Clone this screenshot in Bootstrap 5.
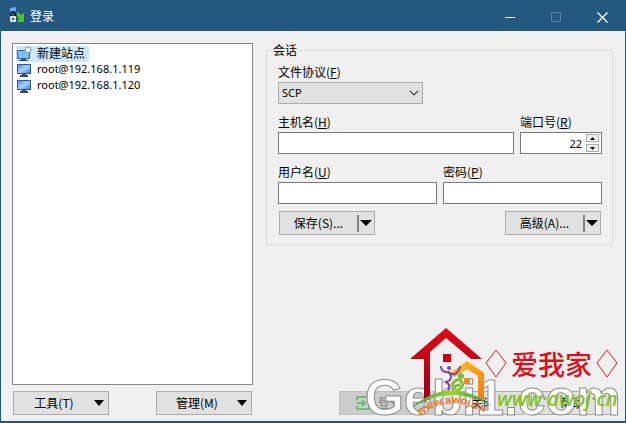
<!DOCTYPE html>
<html lang="zh-CN">
<head>
<meta charset="utf-8">
<meta name="viewport" content="width=device-width, initial-scale=1">
<title>登录</title>
<link href="https://cdn.jsdelivr.net/npm/bootstrap@5.3.0/dist/css/bootstrap.min.css" rel="stylesheet">
<style>
body{font-family:"Noto Sans CJK SC",sans-serif;font-size:12px;line-height:16px;color:#000;background:#f0f0f0}
.win{border:1px solid #24587f;border-top:0;border-bottom-width:2px}
.titlebar{height:31px;background:#24587f;color:#fff}
.titlebar h1{font-size:12px;line-height:16px}
.cap{width:46px;height:31px;background:none;border:0;color:#fff;padding:0}
.cap:disabled{color:#5583a3}
.split{display:grid;grid-template-columns:241fr 347fr;column-gap:13px}
.content{padding:11px 12px 0 11px}
.foot{padding:6px 12px 6px 11px}
.footleft{padding:0 1px}
.sites{background:#fff;border:1px solid #828790;margin-top:1px;padding:2px 3px}
.site{height:16px;border:0;background:none;padding:0;font-family:"Noto Sans","Noto Sans CJK SC",sans-serif;font-size:11px;line-height:16px;gap:4px;color:#000}
.site svg{width:17px;height:16px}
.site span{padding:0 4px 2px 0;line-height:14px}
.site.on{background:#cce8ff;font-size:12px}
.site.on span{padding-bottom:0}
.session{border:1px solid #dcdcdc;padding:6px 10px 9px 11px}
.session legend{float:none;width:auto;font-size:12px;line-height:16px;margin:0 0 0 -6px;padding:0 1px}
.fld{margin-bottom:10px}
.fld label{display:block;line-height:16px;margin-bottom:2px}
.ctl{height:22px;border:1px solid #7a7a7a;border-radius:0;padding:0 3px;font-family:"Noto Sans",sans-serif;font-size:11px;line-height:16px;background-color:#fff;color:#000}
.proto{width:145px;border-color:#adadad;background-color:#e1e1e1;background-size:10px;background-position:right 3px center}
.pair{gap:6px}
.port{flex:0 0 82px}
.spin{border:1px solid #7a7a7a;background:#fff;height:22px;padding:1px 2px}
.spin input{border:0;height:18px;text-align:right;min-width:0;padding:0 4px}
.spin button{width:13px;height:8px;padding:0;border:1px solid #adadad;background:#f0f0f0;line-height:0}
.spin svg{display:block;margin:auto}
.acts{margin:-3px 1px 0}
.key{width:96px;height:24px;border:1px solid #adadad;border-radius:0;background:#e1e1e1;padding:0;font-size:12px;line-height:16px;color:#000}
.key:disabled{background:#ccc;border-color:#bfbfbf;color:#838383;opacity:1}
.short{width:82px}
.bar{width:2px;height:17px;background:#808080}
.drop{margin:0 2px 0 1px;flex-shrink:0}
.footkeys{gap:7px}
.marks{right:0;bottom:0;width:262px;height:100px;pointer-events:none}
</style>
</head>
<body>
<div class="win d-flex flex-column min-vh-100 position-relative">
  <header class="titlebar d-flex align-items-center">
    <svg class="ms-2 me-1" width="17" height="17" viewBox="0 0 17 17" aria-hidden="true">
      <path d="M1 1l6-1v5L5 4 3 8 1 6z" fill="#62b0f2"/><path d="M8 4l4 4 3-2v9H8l2-3-2-3z" fill="#4cc422"/>
      <path d="M2 9V7a2 2 0 0 1 4 0v2" fill="none" stroke="#182530" stroke-width="2"/><path d="M1 9h6v6H1z" fill="#d8dde2"/><path d="M3 11h2v2H3z" fill="#555"/>
    </svg>
    <h1 class="m-0 fw-normal flex-grow-1">登录</h1>
    <button class="cap" aria-label="最小化"><svg width="10" height="11"><path d="M0 5.500h10" stroke="currentColor"/></svg></button>
    <button class="cap" aria-label="最大化" disabled><svg width="11" height="11"><path d="M.5.500h9v9h-9z" fill="none" stroke="currentColor"/></svg></button>
    <button class="cap" aria-label="关闭窗口"><svg width="11" height="11"><path d="M.5.500l10 10M10.500.500l-10 10" stroke="currentColor" stroke-width="1.300"/></svg></button>
  </header>

  <svg width="0" height="0" class="position-absolute" aria-hidden="true">
    <defs>
      <linearGradient id="scr" x2="1" y2="1"><stop stop-color="#4b8ee8"/><stop offset=".5" stop-color="#a9d0ff"/><stop offset="1" stop-color="#3d7fe0"/></linearGradient>
      <g id="pc"><path d="M1 2h14v10H1z" fill="#2c5c95"/><path d="M2 3h12v8H2z" fill="url(#scr)"/><path d="M6 12h4v1h2v2H4v-2h2z" fill="#3c4855"/></g>
    </defs>
  </svg>

  <main class="split content flex-grow-1">
    <div class="sites d-flex flex-column align-items-start">
      <button class="site on d-flex align-items-center"><svg viewBox="0 0 17 16"><path d="M1 4h13v9H1z" fill="#2c6a9f"/><path d="M2 5h11v7H2z" fill="#7fbdf0"/><path d="M5 13h5v1h2v1H3v-1h2z" fill="#3c4855"/><path d="M12 0v8M8 4h8M9 1l6 6M15 1L9 7" stroke="#8899a8"/><circle cx="12" cy="4" r="2.500" fill="#fff" stroke="#94a4b3"/></svg><span>新建站点</span></button>
      <button class="site d-flex align-items-center"><svg viewBox="0 0 17 16"><use href="#pc"/></svg><span>root@192.168.1.119</span></button>
      <button class="site d-flex align-items-center"><svg viewBox="0 0 17 16"><use href="#pc"/></svg><span>root@192.168.1.120</span></button>
    </div>
    <div>
      <fieldset class="session">
        <legend>会话</legend>
        <div class="fld"><label for="proto">文件协议(<u>F</u>)</label>
          <select id="proto" class="form-select ctl proto"><option>SCP</option></select></div>
        <div class="d-flex pair">
          <div class="fld flex-grow-1"><label for="host">主机名(<u>H</u>)</label><input id="host" class="form-control ctl"></div>
          <div class="fld port"><label for="port">端口号(<u>R</u>)</label>
            <div class="spin d-flex"><input id="port" class="form-control ctl" value="22">
              <div class="d-flex flex-column justify-content-between">
                <button aria-label="增加"><svg width="5" height="3"><path d="M0 3h5L2.500 0z"/></svg></button>
                <button aria-label="减少"><svg width="5" height="3"><path d="M0 0h5L2.500 3z"/></svg></button>
              </div></div></div>
        </div>
        <div class="d-flex pair">
          <div class="fld w-50"><label for="user">用户名(<u>U</u>)</label><input id="user" class="form-control ctl"></div>
          <div class="fld w-50"><label for="pass">密码(<u>P</u>)</label><input id="pass" type="password" class="form-control ctl"></div>
        </div>
        <div class="acts d-flex justify-content-between">
          <button class="key btn d-flex align-items-center"><span class="flex-grow-1">保存(S)...</span><i class="bar"></i><svg class="drop" width="12" height="6"><path d="M0 0h12L6 6z"/></svg></button>
          <button class="key btn d-flex align-items-center"><span class="flex-grow-1">高级(A)...</span><i class="bar"></i><svg class="drop" width="12" height="6"><path d="M0 0h12L6 6z"/></svg></button>
        </div>
      </fieldset>
    </div>
  </main>

  <footer class="split foot">
    <div class="footleft d-flex justify-content-between">
      <button class="key btn d-flex align-items-center"><span class="flex-grow-1">工具(T)</span><svg class="me-1 flex-shrink-0" width="10" height="6"><path d="M0 0h10L5 6z"/></svg></button>
      <button class="key btn d-flex align-items-center"><span class="flex-grow-1">管理(M)</span><svg class="me-1 flex-shrink-0" width="10" height="6"><path d="M0 0h10L5 6z"/></svg></button>
    </div>
    <div class="d-flex justify-content-end footkeys">
      <button class="key btn d-flex align-items-center justify-content-center" disabled><svg class="me-2" width="14" height="14" viewBox="0 0 14 14"><path d="M1 4V1h12v12H1v-3" fill="none" stroke="#72bd78" stroke-width="2"/><path d="M1 7h8M6 4l3 3-3 3" fill="none" stroke="#72bd78" stroke-width="2"/></svg><span class="pe-3">登录</span></button>
      <button class="key short btn">关闭</button>
      <button class="key short btn">帮助</button>
    </div>
  </footer>

  <svg class="marks position-absolute" viewBox="364 322 262 100">
    <defs>
      <linearGradient id="rd" x2="0" y2="1"><stop stop-color="#e00a18"/><stop offset="1" stop-color="#980012"/></linearGradient>
      <linearGradient id="og" x2="1" y2="1"><stop stop-color="#ffc323"/><stop offset="1" stop-color="#f47a12"/></linearGradient>
      <linearGradient id="gr"><stop stop-color="#2ea04a"/><stop offset=".5" stop-color="#a2d22c"/><stop offset="1" stop-color="#1d9448"/></linearGradient>
      <path id="arc" d="M421 417Q454 391 493 419"/>
    </defs>
    <text x="366" y="416" font-family="Liberation Sans, sans-serif" font-weight="700" font-size="50" fill="#fff" stroke="#8c8c8c" stroke-width="1">Gebi1.com</text>
    <path d="M411 360L447 329l36 31h-11l-25-21-16 14v47l-6 3v-43z" fill="url(#rd)"/>
    <path d="M444 355h8v8h-8z" fill="#c9001a"/>
    <path d="M451 374l17-12 17 12v28l-6-3v-22l-11-7-12 8z" fill="url(#og)"/>
    <path d="M465 379h6v6h-6z" fill="#f58a1c"/>
    <g fill="none" stroke-linecap="round">
      <path d="M442 368q1 6 8 5q5 8-3 10q6 3 1 11M450 374q8 4 11-6" stroke="#8446a4" stroke-width="2"/>
      <path d="M453 386q3-6 8-5q6 6-2 10q-2 2-1 3M454 394q-1-7 6-8" stroke="#83bf3b" stroke-width="3"/>
    </g>
    <circle cx="450" cy="369" r="2" fill="#8446a4"/><circle cx="462" cy="377" r="3" fill="#7abf42"/>
    <path d="M412 409Q451 375 493 407Q451 384 412 409z" fill="url(#gr)"/>
    <text font-family="Liberation Sans, sans-serif" font-size="11" font-weight="700" fill="#ee7524"><textPath href="#arc">www.awoj.cn</textPath></text>
    <path d="M487 364l10-13 10 13-10 14zM598 364l10-13 10 13-10 14z" fill="none" stroke="#d22030"/>
    <text x="512" y="376" font-family="Noto Sans CJK SC, sans-serif" font-size="27" font-weight="500" fill="#d8101f">爱我家</text>
    <text x="498" y="407" font-family="Open Sans, sans-serif" font-style="italic" font-size="20" font-weight="600" fill="#85c226">www·awoj·cn</text>
  </svg>
</div>
<script src="https://cdn.jsdelivr.net/npm/bootstrap@5.3.0/dist/js/bootstrap.bundle.min.js"></script>
</body>
</html>
